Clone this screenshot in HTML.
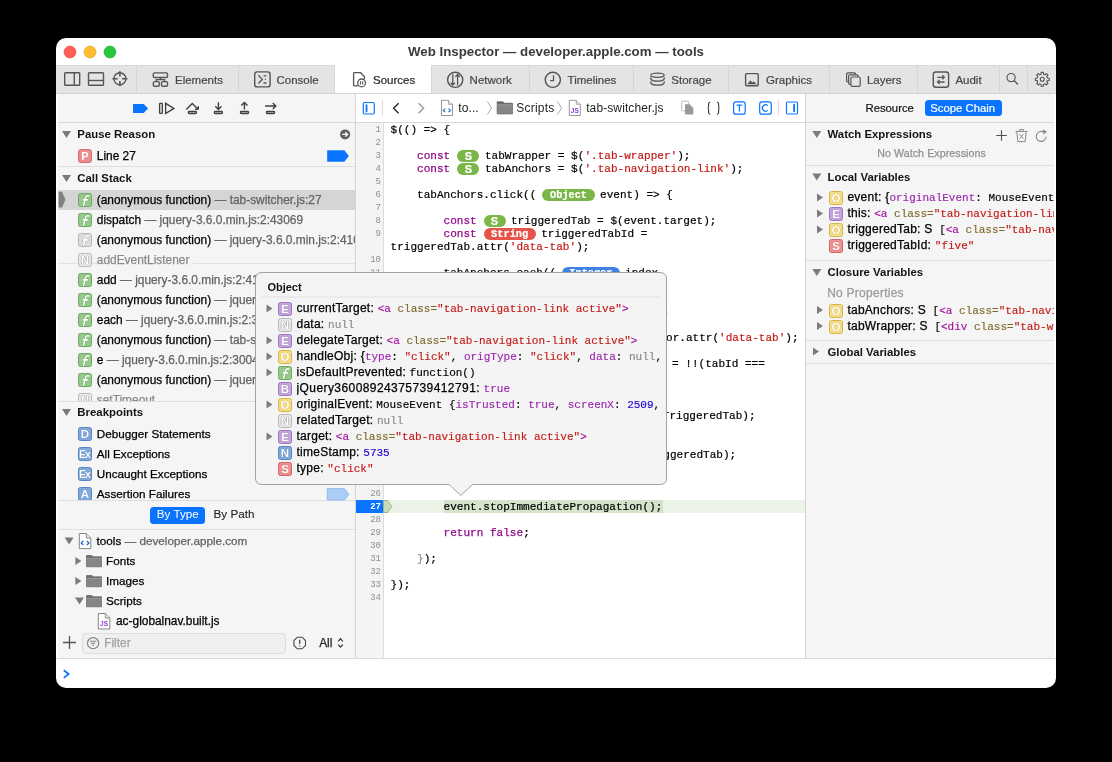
<!DOCTYPE html>
<html><head><meta charset="utf-8">
<style>
*{box-sizing:border-box;margin:0;padding:0}
html,body{width:1112px;height:762px;background:#000;overflow:hidden}
body{font-family:"Liberation Sans",sans-serif;font-size:11px;color:#222;position:relative}
#win{will-change:transform;position:absolute;left:0;top:0;width:1112px;height:762px;clip-path:inset(38px 56px 74px 56px round 10px);background:#fff}
.a{position:absolute;white-space:pre}
.bg{position:absolute}
.mono{font-family:"Liberation Mono",monospace}
svg.ov{position:absolute;left:0;top:0;width:1112px;height:762px}
.tab{font-size:11.5px;color:#474747;line-height:14px;-webkit-text-stroke:0.2px currentColor}
.hdr{font-weight:bold;font-size:11.4px;color:#141414;line-height:14px}
.row{font-size:11.9px;color:#000;line-height:14px;-webkit-text-stroke:0.25px currentColor}
.sub{color:#636363}
.code{font-family:"Liberation Mono",monospace;font-size:11.05px;line-height:13px;color:#000;-webkit-text-stroke:0.2px currentColor}
.ln{font-family:"Liberation Mono",monospace;font-size:9px;color:#888;line-height:13px;text-align:right;width:24.5px}
.kw{color:#900a8a;-webkit-text-stroke:0.25px currentColor}
.str{color:#c41a16}
.tag{color:#aa0d91}
.attr{color:#836c28}
.num{color:#1c00cf}
.nul{color:#808080}
.prop{color:#8a1ea0}
.ic{position:absolute;width:14px;height:14px;border-radius:2.5px;border:1px solid;color:#fff;font-weight:bold;font-size:11.5px;line-height:12.5px;text-align:center;font-family:"Liberation Sans",sans-serif}
.fn{--o:#4f8f43;background:#96c98a;border-color:#6dac60;font-style:italic;font-size:13px;line-height:13px;-webkit-text-stroke:0.5px #fff;text-shadow:0 0 1px #4f8f43}
.fng{--o:#8a8a8a;background:#dcdcdc;border-color:#b8b8b8;font-style:italic;font-size:13px;line-height:13px;-webkit-text-stroke:0.5px #fff;text-shadow:0 0 1px #8a8a8a}
.nat{background:#e9e9e9;border-color:#b9b9b9;color:#fff;text-shadow:0 0 1px #777,0 0 1px #777}
.blu{background:#82a8da;border-color:#5886c3;text-shadow:0 0 1px #3a6aa8}
.ex{font-size:10.5px;letter-spacing:-1px;text-indent:-1px}
.red{background:#ee8f8f;border-color:#d06767;text-shadow:0 0 1px #b04848}
.pur{background:#c3a4dc;border-color:#9d76bd;text-shadow:0 0 1px #7a4f9c}
.yel{background:#f5dd86;border-color:#d5b54c;text-shadow:0 0 1px #b0902a}
.pill{display:inline-block;height:12px;border-radius:6px;color:#fff;font-weight:bold;font-size:10.3px;line-height:13px;text-align:center;vertical-align:top;margin-top:0.5px;font-family:"Liberation Mono",monospace}
.pg{background:#7ab648}
.pr{background:#e5534b}
.pb{background:#3f82e0}
.r12{font-size:12px;letter-spacing:0.25px;line-height:14px;color:#000;-webkit-text-stroke:0.25px currentColor}
.r12 .mono{font-size:11px;letter-spacing:0;-webkit-text-stroke-width:0.15px}
.hdr2{font-size:11.3px;line-height:14px;color:#111;-webkit-text-stroke:0.2px currentColor}
.mono.prop{color:#9b27ae}
.mono.tag{color:#a30f9b}
.mono.attr{color:#7f6a2a}
.mono.str{color:#c41a16}
.mono.num{color:#1c00cf}
.mono.nul{color:#8a8a8a}
</style></head><body>
<div id="win">
  <!-- title bar -->
  <div class="a" style="left:0;top:38px;width:1112px;text-align:center;font-weight:bold;font-size:13.3px;color:#3b3b3b;line-height:16px;top:43.5px">Web Inspector — developer.apple.com — tools</div>

  <!-- tab bar -->
  <div class="bg" style="left:56px;top:65px;width:1000px;height:29px;background:#e4e4e4;border-top:1px solid #d9d9d9;border-bottom:1px solid #d3d3d3"></div>
  <div class="bg" style="left:335px;top:65px;width:96px;height:28px;background:#fff"></div>

  <!-- left sidebar -->
  <div class="bg" style="left:56px;top:94px;width:299px;height:564px;background:#f5f5f5"></div>
  <!-- editor -->
  <div class="bg" style="left:356px;top:94px;width:449px;height:564px;background:#fff"></div>
  <div class="bg" style="left:356px;top:123px;width:27px;height:535px;background:#f4f4f4"></div>
  <!-- right sidebar -->
  <div class="bg" style="left:806px;top:94px;width:250px;height:564px;background:#f5f5f5"></div>
  <!-- dividers -->
  <div class="bg" style="left:355px;top:94px;width:1px;height:564px;background:#d4d4d4"></div>
  <div class="bg" style="left:805px;top:94px;width:1px;height:564px;background:#d4d4d4"></div>
  <div class="bg" style="left:383px;top:123px;width:1px;height:535px;background:#dcdcdc"></div>
  <div class="bg" style="left:56px;top:122px;width:1000px;height:1px;background:#d8d8d8"></div>
  <div class="bg" style="left:56px;top:658px;width:1000px;height:1px;background:#dcdcdc"></div>
  <div class="bg" style="left:56px;top:659px;width:1000px;height:29px;background:#fff"></div>

  <div class="a tab" style="left:175px;top:73px">Elements</div>
  <div class="a tab" style="left:276.5px;top:73px">Console</div>
  <div class="a tab" style="left:373px;top:73px;color:#262626">Sources</div>
  <div class="a tab" style="left:469.6px;top:73px">Network</div>
  <div class="a tab" style="left:567.6px;top:73px">Timelines</div>
  <div class="a tab" style="left:671.3px;top:73px">Storage</div>
  <div class="a tab" style="left:766px;top:73px">Graphics</div>
  <div class="a tab" style="left:866.9px;top:73px">Layers</div>
  <div class="a tab" style="left:955.4px;top:73px">Audit</div>
  <svg class="ov" viewBox="0 0 1112 762">
    <g fill="#d6d6d6">
      <rect x="136" y="66" width="1" height="27"/>
      <rect x="238" y="66" width="1" height="27"/>
      <rect x="334" y="66" width="1" height="27"/>
      <rect x="431" y="66" width="1" height="27"/>
      <rect x="529" y="66" width="1" height="27"/>
      <rect x="633" y="66" width="1" height="27"/>
      <rect x="728" y="66" width="1" height="27"/>
      <rect x="829" y="66" width="1" height="27"/>
      <rect x="917" y="66" width="1" height="27"/>
      <rect x="999" y="66" width="1" height="27"/>
      <rect x="1027" y="66" width="1" height="27"/>
    </g>
    <!-- traffic lights -->
    <circle cx="70" cy="52" r="6" fill="#ff5f57" stroke="#e2463f" stroke-width="0.6"/>
    <circle cx="90" cy="52" r="6" fill="#febc2e" stroke="#e1a116" stroke-width="0.6"/>
    <circle cx="110" cy="52" r="6" fill="#28c840" stroke="#1aab29" stroke-width="0.6"/>
    <g fill="none" stroke="#555" stroke-width="1.4">
      <!-- split v -->
      <rect x="64.7" y="72.7" width="15" height="12.6" rx="0.8"/>
      <line x1="74.3" y1="72.7" x2="74.3" y2="85.3"/>
      <!-- split h -->
      <rect x="88.5" y="72.7" width="15" height="12.6" rx="0.8"/>
      <line x1="88.5" y1="80.5" x2="103.5" y2="80.5"/>
      <!-- crosshair -->
      <circle cx="119.9" cy="78.8" r="6"/>
      <path d="M119.9 71.3V76.6M119.9 81V86.3M112.4 78.8H117.7M122.1 78.8H127.4" stroke-width="1.6"/>
      <!-- elements -->
      <rect x="153.3" y="72.9" width="14.2" height="4.6" rx="1"/>
      <rect x="153.3" y="81.6" width="6" height="4.6" rx="1.3"/>
      <rect x="161.5" y="81.6" width="6" height="4.6" rx="1.3"/>
      <path d="M160.4 77.5V79.6M156.3 81.6V79.6H164.5V81.6"/>
      <!-- console -->
      <rect x="254.7" y="71.9" width="15.4" height="15" rx="2.5"/>
      <path d="M258.4 75.3L262.3 79.4L258.4 83.5" stroke-width="1.3"/>
      <path d="M263.5 75.9H266.4M264.9 79.4H265.9M263.5 83H266.4" stroke-width="1.3"/>
      <!-- sources -->
      <path d="M358 85.9H354.4Q353.6 85.9 353.6 85.1V73.5Q353.6 72.7 354.4 72.7H360.6L364.4 76.5V79.2" stroke-width="1.3"/>
      <circle cx="361.6" cy="82.9" r="3.9" stroke-width="1.3"/>
      <path d="M360.5 81.2V84.6M362.7 81.2V84.6" stroke-width="1.1"/>
      <!-- network -->
      <circle cx="455.2" cy="79.8" r="7.6"/>
      <path d="M452.8 74.2V85M450.6 82.8L452.8 85L455 82.8M457.6 85.4V74.6M455.4 76.8L457.6 74.6L459.8 76.8" stroke-width="1.3"/>
      <!-- timelines -->
      <circle cx="552.8" cy="79.8" r="7.6"/>
      <path d="M553.5 75.2V80.6H550.2" stroke-width="1.3"/>
      <!-- storage -->
      <ellipse cx="657.5" cy="75.2" rx="6.6" ry="2.1" stroke-width="1.3"/>
      <path d="M651 77.3C650.2 78.5 650.7 81.1 657.5 81.1C664.3 81.1 664.8 78.5 664 77.3M651 81.4C650.2 82.6 650.7 85.2 657.5 85.2C664.3 85.2 664.8 82.6 664 81.4" stroke-width="1.3"/>
      <!-- graphics -->
      <rect x="745.6" y="73.6" width="12.6" height="12.2" rx="1"/>
      <!-- layers -->
      <rect x="846.6" y="72.8" width="9" height="9" rx="1.3" stroke-width="1.2"/>
      <rect x="848.6" y="74.8" width="9.5" height="9.5" rx="1.3" fill="#e4e4e4" stroke-width="1.2"/>
      <rect x="850.9" y="77" width="9.3" height="9.3" rx="1.3" fill="#e4e4e4" stroke-width="1.2"/>
      <!-- audit -->
      <rect x="933.3" y="72" width="15.3" height="15.2" rx="2.5"/>
      <path d="M937.3 77.3H944.4M942.3 75.2L944.4 77.3L942.3 79.4M944.6 82H937.5M939.6 79.9L937.5 82L939.6 84.1" stroke-width="1.3"/>
      <!-- search -->
      <circle cx="1011.1" cy="77.6" r="4.1" stroke-width="1.15"/>
      <path d="M1014 80.5L1018 84.5" stroke-width="1.2"/>
    </g>
    <path d="M747.3 84.2L750.4 80.2L752.3 82.4L753.6 81.2L756.8 84.2Z" fill="#555"/>
    <!-- gear -->
    <path d="M1049.21 78.20L1049.21 80.40L1047.45 80.54L1046.82 82.07L1047.96 83.41L1046.41 84.96L1045.07 83.82L1043.54 84.45L1043.40 86.21L1041.20 86.21L1041.06 84.45L1039.53 83.82L1038.19 84.96L1036.64 83.41L1037.78 82.07L1037.15 80.54L1035.39 80.40L1035.39 78.20L1037.15 78.06L1037.78 76.53L1036.64 75.19L1038.19 73.64L1039.53 74.78L1041.06 74.15L1041.20 72.39L1043.40 72.39L1043.54 74.15L1045.07 74.78L1046.41 73.64L1047.96 75.19L1046.82 76.53L1047.45 78.06Z" fill="none" stroke="#555" stroke-width="1.1" stroke-linejoin="round"/>
    <circle cx="1042.3" cy="79.3" r="2" fill="none" stroke="#555" stroke-width="1.1"/>
  </svg>
<div class="a" style="left:0;top:0;width:1112px;height:762px;clip-path:inset(94px 757px 0 56px)">
<div class="bg" style="left:56px;top:166px;width:299px;height:1px;background:#dedede"></div>
<div class="bg" style="left:56px;top:190px;width:299px;height:20px;background:#d5d5d5"></div>
<div class="bg" style="left:56px;top:401px;width:299px;height:1px;background:#dedede"></div>
<div class="bg" style="left:56px;top:500px;width:299px;height:1px;background:#dedede"></div>
<div class="bg" style="left:56px;top:529px;width:299px;height:1px;background:#dedede"></div>
<div class="bg" style="left:56px;top:263px;width:299px;height:1px;background:#e2e2e2"></div>
<div class="a hdr" style="left:77.3px;top:127px;">Pause Reason</div>
<div class="a row" style="left:96.8px;top:149px;">Line 27</div>
<div class="a hdr" style="left:77.3px;top:171px;">Call Stack</div>
<div class="ic fn" style="left:78px;top:193px;"><svg style="position:absolute;left:-1px;top:-1px" width="14" height="14" viewBox="0 0 14 14"><path d="M10.9 3.1C9.6 2.5 8.1 2.7 7.6 4.5L5.5 12.2M5.3 6.9H9.6" fill="none" style="stroke:var(--o)" stroke-width="2.5" stroke-linecap="round" opacity="0.55"/><path d="M10.9 3.1C9.6 2.5 8.1 2.7 7.6 4.5L5.5 12.2M5.3 6.9H9.6" fill="none" stroke="#fff" stroke-width="1.6" stroke-linecap="round"/></svg></div>
<div class="a row" style="left:96.8px;top:193px;">(anonymous function)<span class="sub"> — tab-switcher.js:27</span></div>
<div class="ic fn" style="left:78px;top:213px;"><svg style="position:absolute;left:-1px;top:-1px" width="14" height="14" viewBox="0 0 14 14"><path d="M10.9 3.1C9.6 2.5 8.1 2.7 7.6 4.5L5.5 12.2M5.3 6.9H9.6" fill="none" style="stroke:var(--o)" stroke-width="2.5" stroke-linecap="round" opacity="0.55"/><path d="M10.9 3.1C9.6 2.5 8.1 2.7 7.6 4.5L5.5 12.2M5.3 6.9H9.6" fill="none" stroke="#fff" stroke-width="1.6" stroke-linecap="round"/></svg></div>
<div class="a row" style="left:96.8px;top:213px;">dispatch<span class="sub"> — jquery-3.6.0.min.js:2:43069</span></div>
<div class="ic fng" style="left:78px;top:233px;"><svg style="position:absolute;left:-1px;top:-1px" width="14" height="14" viewBox="0 0 14 14"><path d="M10.9 3.1C9.6 2.5 8.1 2.7 7.6 4.5L5.5 12.2M5.3 6.9H9.6" fill="none" style="stroke:var(--o)" stroke-width="2.5" stroke-linecap="round" opacity="0.55"/><path d="M10.9 3.1C9.6 2.5 8.1 2.7 7.6 4.5L5.5 12.2M5.3 6.9H9.6" fill="none" stroke="#fff" stroke-width="1.6" stroke-linecap="round"/></svg></div>
<div class="a row" style="left:96.8px;top:233px;">(anonymous function)<span class="sub"> — jquery-3.6.0.min.js:2:41048</span></div>
<div class="ic nat" style="left:78px;top:253px;">N</div>
<div class="a row" style="left:96.8px;top:253px;color:#8a8a8a;background:#f5f5f5;padding-right:4px">addEventListener</div>
<div class="ic fn" style="left:78px;top:273px;"><svg style="position:absolute;left:-1px;top:-1px" width="14" height="14" viewBox="0 0 14 14"><path d="M10.9 3.1C9.6 2.5 8.1 2.7 7.6 4.5L5.5 12.2M5.3 6.9H9.6" fill="none" style="stroke:var(--o)" stroke-width="2.5" stroke-linecap="round" opacity="0.55"/><path d="M10.9 3.1C9.6 2.5 8.1 2.7 7.6 4.5L5.5 12.2M5.3 6.9H9.6" fill="none" stroke="#fff" stroke-width="1.6" stroke-linecap="round"/></svg></div>
<div class="a row" style="left:96.8px;top:273px;">add<span class="sub"> — jquery-3.6.0.min.js:2:41430</span></div>
<div class="ic fn" style="left:78px;top:293px;"><svg style="position:absolute;left:-1px;top:-1px" width="14" height="14" viewBox="0 0 14 14"><path d="M10.9 3.1C9.6 2.5 8.1 2.7 7.6 4.5L5.5 12.2M5.3 6.9H9.6" fill="none" style="stroke:var(--o)" stroke-width="2.5" stroke-linecap="round" opacity="0.55"/><path d="M10.9 3.1C9.6 2.5 8.1 2.7 7.6 4.5L5.5 12.2M5.3 6.9H9.6" fill="none" stroke="#fff" stroke-width="1.6" stroke-linecap="round"/></svg></div>
<div class="a row" style="left:96.8px;top:293px;">(anonymous function)<span class="sub"> — jquery-3.6.0.min.js:2:40542</span></div>
<div class="ic fn" style="left:78px;top:313px;"><svg style="position:absolute;left:-1px;top:-1px" width="14" height="14" viewBox="0 0 14 14"><path d="M10.9 3.1C9.6 2.5 8.1 2.7 7.6 4.5L5.5 12.2M5.3 6.9H9.6" fill="none" style="stroke:var(--o)" stroke-width="2.5" stroke-linecap="round" opacity="0.55"/><path d="M10.9 3.1C9.6 2.5 8.1 2.7 7.6 4.5L5.5 12.2M5.3 6.9H9.6" fill="none" stroke="#fff" stroke-width="1.6" stroke-linecap="round"/></svg></div>
<div class="a row" style="left:96.8px;top:313px;">each<span class="sub"> — jquery-3.6.0.min.js:2:3004</span></div>
<div class="ic fn" style="left:78px;top:333px;"><svg style="position:absolute;left:-1px;top:-1px" width="14" height="14" viewBox="0 0 14 14"><path d="M10.9 3.1C9.6 2.5 8.1 2.7 7.6 4.5L5.5 12.2M5.3 6.9H9.6" fill="none" style="stroke:var(--o)" stroke-width="2.5" stroke-linecap="round" opacity="0.55"/><path d="M10.9 3.1C9.6 2.5 8.1 2.7 7.6 4.5L5.5 12.2M5.3 6.9H9.6" fill="none" stroke="#fff" stroke-width="1.6" stroke-linecap="round"/></svg></div>
<div class="a row" style="left:96.8px;top:333px;">(anonymous function)<span class="sub"> — tab-switcher.js:12</span></div>
<div class="ic fn" style="left:78px;top:353px;"><svg style="position:absolute;left:-1px;top:-1px" width="14" height="14" viewBox="0 0 14 14"><path d="M10.9 3.1C9.6 2.5 8.1 2.7 7.6 4.5L5.5 12.2M5.3 6.9H9.6" fill="none" style="stroke:var(--o)" stroke-width="2.5" stroke-linecap="round" opacity="0.55"/><path d="M10.9 3.1C9.6 2.5 8.1 2.7 7.6 4.5L5.5 12.2M5.3 6.9H9.6" fill="none" stroke="#fff" stroke-width="1.6" stroke-linecap="round"/></svg></div>
<div class="a row" style="left:96.8px;top:353px;">e<span class="sub"> — jquery-3.6.0.min.js:2:30046</span></div>
<div class="ic fn" style="left:78px;top:373px;"><svg style="position:absolute;left:-1px;top:-1px" width="14" height="14" viewBox="0 0 14 14"><path d="M10.9 3.1C9.6 2.5 8.1 2.7 7.6 4.5L5.5 12.2M5.3 6.9H9.6" fill="none" style="stroke:var(--o)" stroke-width="2.5" stroke-linecap="round" opacity="0.55"/><path d="M10.9 3.1C9.6 2.5 8.1 2.7 7.6 4.5L5.5 12.2M5.3 6.9H9.6" fill="none" stroke="#fff" stroke-width="1.6" stroke-linecap="round"/></svg></div>
<div class="a row" style="left:96.8px;top:373px;">(anonymous function)<span class="sub"> — jquery-3.6.0.min.js:2:30350</span></div>
<div class="ic nat" style="left:78px;top:393px;">N</div>
<div class="a row" style="left:96.8px;top:393px;color:#8a8a8a;background:#f5f5f5;padding-right:4px">setTimeout</div>
<div class="bg" style="left:56px;top:401px;width:299px;height:23px;background:#f5f5f5;border-top:1px solid #dedede"></div>
<div class="a hdr" style="left:77.3px;top:405px;">Breakpoints</div>
<div class="ic blu" style="left:78px;top:427px;">D</div>
<div class="a row" style="left:96.8px;top:427px;font-size:11.7px">Debugger Statements</div>
<div class="ic blu ex" style="left:78px;top:447px;">Ex</div>
<div class="a row" style="left:96.8px;top:447px;font-size:11.7px">All Exceptions</div>
<div class="ic blu ex" style="left:78px;top:467px;">Ex</div>
<div class="a row" style="left:96.8px;top:467px;font-size:11.7px">Uncaught Exceptions</div>
<div class="ic blu" style="left:78px;top:487px;">A</div>
<div class="a row" style="left:96.8px;top:487px;font-size:11.7px">Assertion Failures</div>
<div class="bg" style="left:56px;top:501px;width:299px;height:28px;background:#f5f5f5"></div>
<div class="bg" style="left:56px;top:500px;width:299px;height:1px;background:#dedede"></div>
<div class="a" style="left:150px;top:507px;width:54.5px;height:16.5px;background:#0a74fe;border-radius:3.5px"></div>
<div class="a row" style="left:156.8px;top:507px;color:#fff;-webkit-text-stroke:0;font-size:11.7px">By Type</div>
<div class="a row" style="left:213.5px;top:507px;color:#222;-webkit-text-stroke:0.1px currentColor;font-size:11.7px">By Path</div>
<div class="a row" style="left:96.6px;top:534px;font-size:11.7px">tools<span class="sub"> — developer.apple.com</span></div>
<div class="a row" style="left:106px;top:554px;font-size:11.7px">Fonts</div>
<div class="a row" style="left:106px;top:574px;font-size:11.7px">Images</div>
<div class="a row" style="left:106px;top:594px;font-size:11.7px">Scripts</div>
<div class="a row" style="left:116px;top:614px;">ac-globalnav.built.js</div>
<div class="bg" style="left:56px;top:629px;width:299px;height:29px;background:#f5f5f5"></div>
<div class="a" style="left:82.2px;top:632.8px;width:204px;height:21px;background:#f0f0f0;border:1px solid #dddddd;border-radius:4px"></div>
<div class="a row" style="left:104.2px;top:636px;color:#a0a0a0">Filter</div>
<div class="a row" style="left:319.2px;top:636px;color:#222">All</div>
<svg class="ov" viewBox="0 0 1112 762">
  <!-- debugger toolbar -->
  <path d="M133 104H143.7L148.1 108.5L143.7 112.9H133Z" fill="#0a74ff"/>
  <g fill="none" stroke="#404040" stroke-width="1.35">
    <rect x="159.6" y="103.4" width="2.7" height="10" rx="0.6"/>
    <path d="M165.6 103.3V113.5L173.9 108.4Z" stroke-linejoin="miter"/>
    <path d="M186.2 109.5L192.3 103.4L198.3 109.4M198.3 109.4V106.2M198.3 109.4H195.1" stroke-width="1.4"/>
    <rect x="188.4" y="111.5" width="8" height="2" rx="0.8"/>
    <path d="M218.4 102.2V109.3M215.3 106.3L218.4 109.4L221.5 106.3" stroke-width="1.4"/>
    <rect x="214.4" y="111.5" width="8" height="2" rx="0.8"/>
    <path d="M244.4 102.6V109.6M241.3 105.5L244.4 102.4L247.5 105.5" stroke-width="1.4"/>
    <rect x="240.5" y="111.5" width="8" height="2" rx="0.8"/>
    <path d="M265.1 106H275.8M272.8 103L275.8 106L272.8 109" stroke-width="1.4"/>
    <rect x="266.5" y="111.5" width="8" height="2" rx="0.8"/>
  </g>
  <!-- disclosure triangles -->
  <g fill="#7b7b7b">
    <path d="M62 131H71L66.5 138Z"/>
    <path d="M62 175H71L66.5 182Z"/>
    <path d="M62 409H71L66.5 416Z"/>
    <path d="M64.6 537.5H73.6L69.1 544.5Z"/>
    <path d="M75.4 557V565L81.4 561Z"/>
    <path d="M75.4 577V585L81.4 581Z"/>
    <path d="M75 597.5H84L79.5 604.5Z"/>
  </g>
  <!-- pause reason goto -->
  <circle cx="345.1" cy="134.4" r="5" fill="#5f5f5f"/>
  <path d="M342.2 134.4H347.4M345.3 132.2L347.6 134.4L345.3 136.6" fill="none" stroke="#fff" stroke-width="1.3"/>
  <!-- P icon -->
  <rect x="78.5" y="149.5" width="13" height="13" rx="2.3" fill="#ea8d8d" stroke="#d57070"/>
  <text x="85" y="160.3" text-anchor="middle" font-family="Liberation Sans" font-weight="bold" font-size="11" fill="#fff">P</text>
  <path d="M327.2 150.2H344.3L348.9 156L344.3 161.8H327.2Z" fill="#0a74ff"/>
  <!-- selected arrow -->
  <path d="M58.6 191.7H62L65.5 199.5L62 207.4H58.6Z" fill="#828282"/>
  <!-- assertion failures marker (light blue) -->
  <path d="M327.2 488.5H344.3L348.9 494.3L344.3 500.1H327.2Z" fill="#a9cdf5" stroke="#8ab6ea" stroke-width="0.8"/>
  <!-- tree icons -->
  <g>
    <path d="M79.3 533.5H86.3L90.8 538V548.6H79.3Z" fill="#fff" stroke="#7a7a7a" stroke-width="0.9"/>
    <path d="M86.3 533.5V538H90.8" fill="#e6e6e6" stroke="#7a7a7a" stroke-width="0.8"/>
    <path d="M83.4 540.8L81.2 543L83.4 545.2M86.8 540.8L89 543L86.8 545.2" fill="none" stroke="#1f5fd6" stroke-width="1.2"/>
  </g>
  <g id="fold">
    <path d="M86.5 555.5H92L93.2 556.8H101.5V566.8H86.5Z" fill="#6f6f6f" stroke="#555" stroke-width="0.6"/>
    <rect x="86.5" y="558" width="15" height="8.8" fill="#858585"/>
    <rect x="86.5" y="558" width="15" height="1" fill="#9a9a9a"/>
  </g>
  <use href="#fold" y="20"/>
  <use href="#fold" y="40"/>
  <g>
    <path d="M98.3 613.5H105.3L109.8 618V629H98.3Z" fill="#fff" stroke="#7a7a7a" stroke-width="0.9"/>
    <path d="M105.3 613.5V618H109.8" fill="#e6e6e6" stroke="#7a7a7a" stroke-width="0.8"/>
    <text x="104" y="626" text-anchor="middle" font-family="Liberation Sans" font-weight="bold" font-size="6.5" fill="#8a3ee0">JS</text>
  </g>
  <!-- filter bar -->
  <path d="M69.5 636V649M63 642.5H76" stroke="#555" stroke-width="1.3"/>
  <circle cx="93.1" cy="643.2" r="5.6" fill="none" stroke="#808080" stroke-width="1.1"/>
  <path d="M90 641.2H96.2M91 643.2H95.2M92.2 645.2H94" stroke="#808080" stroke-width="1.1"/>
  <path d="M297.3 637.2H302.1L305.5 640.6V645.4L302.1 648.8H297.3L293.9 645.4V640.6Z" fill="none" stroke="#4a4a4a" stroke-width="1.1"/>
  <path d="M299.7 639.8V644M299.7 645.4V646.5" stroke="#4a4a4a" stroke-width="1.3"/>
  <path d="M338.2 641.3L340.5 638.7L342.8 641.3M338.2 644.6L340.5 647.2L342.8 644.6" fill="none" stroke="#333" stroke-width="1.2"/>
  <!-- console prompt -->
  <path d="M63.8 670.3L68.6 674.1L63.8 677.9" fill="none" stroke="#0a74ff" stroke-width="1.8"/>
</svg>
</div>
<div class="bg" style="left:384px;top:500px;width:421px;height:13px;background:#eaf3e5"></div>
<div class="bg" style="left:444px;top:500px;width:219px;height:13px;background:#d4e3ca"></div>
<div class="bg" style="left:356px;top:500px;width:27px;height:13px;background:#0a74fe"></div>
<div class="a ln" style="left:356.5px;top:124px;color:#8f8f8f;font-weight:normal">1</div>
<div class="a ln" style="left:356.5px;top:137px;color:#8f8f8f;font-weight:normal">2</div>
<div class="a ln" style="left:356.5px;top:150px;color:#8f8f8f;font-weight:normal">3</div>
<div class="a ln" style="left:356.5px;top:163px;color:#8f8f8f;font-weight:normal">4</div>
<div class="a ln" style="left:356.5px;top:176px;color:#8f8f8f;font-weight:normal">5</div>
<div class="a ln" style="left:356.5px;top:189px;color:#8f8f8f;font-weight:normal">6</div>
<div class="a ln" style="left:356.5px;top:202px;color:#8f8f8f;font-weight:normal">7</div>
<div class="a ln" style="left:356.5px;top:215px;color:#8f8f8f;font-weight:normal">8</div>
<div class="a ln" style="left:356.5px;top:228px;color:#8f8f8f;font-weight:normal">9</div>
<div class="a ln" style="left:356.5px;top:254px;color:#8f8f8f;font-weight:normal">10</div>
<div class="a ln" style="left:356.5px;top:267px;color:#8f8f8f;font-weight:normal">11</div>
<div class="a ln" style="left:356.5px;top:488px;color:#8f8f8f;font-weight:normal">26</div>
<div class="a ln" style="left:356.5px;top:501px;color:#fff;font-weight:bold">27</div>
<div class="a ln" style="left:356.5px;top:514px;color:#8f8f8f;font-weight:normal">28</div>
<div class="a ln" style="left:356.5px;top:527px;color:#8f8f8f;font-weight:normal">29</div>
<div class="a ln" style="left:356.5px;top:540px;color:#8f8f8f;font-weight:normal">30</div>
<div class="a ln" style="left:356.5px;top:553px;color:#8f8f8f;font-weight:normal">31</div>
<div class="a ln" style="left:356.5px;top:566px;color:#8f8f8f;font-weight:normal">32</div>
<div class="a ln" style="left:356.5px;top:579px;color:#8f8f8f;font-weight:normal">33</div>
<div class="a ln" style="left:356.5px;top:592px;color:#8f8f8f;font-weight:normal">34</div>
<div class="a code" style="left:390.5px;top:123.5px">$(() =&gt; {</div>
<div class="a code" style="left:390.5px;top:149.5px">    <span class="kw">const</span><span class="pill pg" style="margin-left:7px;margin-right:-1.2px;width:22.3px;font-family:Liberation Sans;font-size:11px">S</span> tabWrapper = $(<span class="str">'.tab-wrapper'</span>);</div>
<div class="a code" style="left:390.5px;top:162.5px">    <span class="kw">const</span><span class="pill pg" style="margin-left:7px;margin-right:-1.2px;width:22.3px;font-family:Liberation Sans;font-size:11px">S</span> tabAnchors = $(<span class="str">'.tab-navigation-link'</span>);</div>
<div class="a code" style="left:390.5px;top:188.5px">    tabAnchors.click((<span class="pill pg" style="margin-left:6px;margin-right:-1.2px;width:52.3px;">Object</span> event) =&gt; {</div>
<div class="a code" style="left:390.5px;top:214.5px">        <span class="kw">const</span><span class="pill pg" style="margin-left:6.8px;margin-right:-1.2px;width:22px;font-family:Liberation Sans;font-size:11px">S</span> triggeredTab = $(event.target);</div>
<div class="a code" style="left:390.5px;top:227.5px">        <span class="kw">const</span><span class="pill pr" style="margin-left:6.8px;margin-right:-1.2px;width:52.3px;">String</span> triggeredTabId =</div>
<div class="a code" style="left:390.5px;top:240.5px">triggeredTab.attr(<span class="str">'data-tab'</span>);</div>
<div class="a code" style="left:390.5px;top:266.5px">        tabAnchors.each((<span class="pill pb" style="margin-left:6px;margin-right:-1.2px;width:57.4px;">Integer</span> index</div>
<div class="a code" style="left:390.5px;top:500.5px">        event.stopImmediatePropagation();</div>
<div class="a code" style="left:390.5px;top:526.5px">        <span class="kw">return</span> <span class="kw">false</span>;</div>
<div class="a code" style="left:390.5px;top:552.5px">    <span style="color:#8c8c8c">}</span>);</div>
<div class="a code" style="left:390.5px;top:578.5px">});</div>
<div class="a code" style="left:663px;top:305.5px">;</div>
<div class="a code" style="left:666px;top:331.5px">or.attr(<span class="str">'data-tab'</span>);</div>
<div class="a code" style="left:672px;top:357.5px">= !!(tabId ===</div>
<div class="a code" style="left:662.8px;top:409.5px">TriggeredTab);</div>
<div class="a code" style="left:643.4px;top:448.5px">triggeredTab);</div>
<div class="a" style="left:458.3px;top:101px;font-size:12px;line-height:14px;color:#1e1e1e;letter-spacing:0.1px">to...</div>
<div class="a" style="left:516.3px;top:101px;font-size:12px;line-height:14px;color:#1e1e1e;letter-spacing:0.2px">Scripts</div>
<div class="a" style="left:586.2px;top:101px;font-size:12px;line-height:14px;color:#1e1e1e;letter-spacing:0.1px">tab-switcher.js</div>
<svg class="ov" viewBox="0 0 1112 762">
  <rect x="363.3" y="102.5" width="11" height="11.5" rx="1.2" fill="none" stroke="#0a74ff" stroke-width="1.2"/>
  <rect x="365.6" y="104.3" width="1.8" height="8" rx="0.9" fill="#0a74ff"/>
  <rect x="382" y="100" width="1" height="15.5" fill="#dcdcdc"/>
  <path d="M398.6 103.2L393.6 108.2L398.6 113.2" fill="none" stroke="#2a2a2a" stroke-width="1.4"/>
  <path d="M418.6 103.2L423.6 108.2L418.6 113.2" fill="none" stroke="#9a9a9a" stroke-width="1.4"/>
  <path d="M441.5 100.3H448.5L452.5 104.3V115.5H441.5Z" fill="#fff" stroke="#8a8a8a" stroke-width="0.9"/>
  <path d="M448.5 100.3V104.3H452.5" fill="#e8e8e8" stroke="#8a8a8a" stroke-width="0.7"/>
  <path d="M445.2 108.6L443.4 110.4L445.2 112.2M448.6 108.6L450.4 110.4L448.6 112.2" fill="none" stroke="#1f5fd6" stroke-width="1.1"/>
  <path d="M487.3 101.5L491.6 108L487.3 114.5" fill="none" stroke="#9d9d9d" stroke-width="0.9"/>
  <path d="M497.2 101.8H502.8L504.2 103.2H512.4V113.9H497.2Z" fill="#6e6e6e" stroke="#4f4f4f" stroke-width="0.7"/>
  <rect x="497.3" y="104.5" width="15" height="9.3" fill="#858585"/>
  <rect x="497.3" y="104.5" width="15" height="1" fill="#a0a0a0"/>
  <path d="M557.3 101.5L561.6 108L557.3 114.5" fill="none" stroke="#9d9d9d" stroke-width="0.9"/>
  <path d="M569.3 100.3H576.3L580.3 104.3V115.5H569.3Z" fill="#fff" stroke="#8a8a8a" stroke-width="0.9"/>
  <path d="M576.3 100.3V104.3H580.3" fill="#e8e8e8" stroke="#8a8a8a" stroke-width="0.7"/>
  <text x="574.8" y="113.3" text-anchor="middle" font-family="Liberation Sans" font-weight="bold" font-size="6.5" fill="#8a3ee0">JS</text>
  <rect x="681.6" y="101.2" width="7.2" height="9.6" rx="1" fill="#fff" stroke="#b5b5b5" stroke-width="0.9"/>
  <path d="M685 104.3H689.6L693.3 108V114.4H685Z" fill="#9a9a9a"/>
  <path d="M710.2 102.2Q708.6 102.2 708.6 103.8V107Q708.6 108.2 707.6 108.2Q708.6 108.2 708.6 109.4V112.6Q708.6 114.2 710.2 114.2M717 102.2Q718.6 102.2 718.6 103.8V107Q718.6 108.2 719.6 108.2Q718.6 108.2 718.6 109.4V112.6Q718.6 114.2 717 114.2" fill="none" stroke="#333" stroke-width="1.1"/>
  <rect x="733.6" y="101.8" width="11.6" height="12.4" rx="2.3" fill="none" stroke="#0a74ff" stroke-width="1.2"/>
  <path d="M736.6 105.2H742.2M739.4 105.2V111.4" stroke="#0a74ff" stroke-width="1.2"/>
  <rect x="759.7" y="101.8" width="11.6" height="12.4" rx="2.3" fill="none" stroke="#0a74ff" stroke-width="1.2"/>
  <path d="M767.8 105.6A3.2 3.2 0 1 0 767.8 110.4" fill="none" stroke="#0a74ff" stroke-width="1.2"/>
  <rect x="778" y="100" width="1" height="15.5" fill="#dcdcdc"/>
  <rect x="786.5" y="102" width="11" height="12" rx="1.2" fill="none" stroke="#0a74ff" stroke-width="1.2"/>
  <rect x="793.2" y="103.8" width="1.8" height="8.4" rx="0.9" fill="#0a74ff"/>
</svg>
<svg class="ov" viewBox="0 0 1112 762">
  <path d="M383.5 500.5H387.5L391.8 506.5L387.5 512.5H383.5Z" fill="#c9ddb9" stroke="#8fb07a" stroke-width="0.9"/>
</svg>
<div class="a" style="left:0;top:0;width:1112px;height:762px;clip-path:inset(94px 56px 0 806px)">
<div class="a hdr2" style="left:865.5px;top:101px;">Resource</div>
<div class="a" style="left:924.5px;top:99.6px;width:77.5px;height:16.7px;background:#0a74fe;border-radius:3.5px"></div>
<div class="a hdr2" style="left:930.3px;top:101px;color:#fff">Scope Chain</div>
<div class="bg" style="left:806px;top:165px;width:250px;height:1px;background:#dedede"></div>
<div class="bg" style="left:806px;top:260px;width:250px;height:1px;background:#dedede"></div>
<div class="bg" style="left:806px;top:340px;width:250px;height:1px;background:#dedede"></div>
<div class="bg" style="left:806px;top:363px;width:250px;height:1px;background:#dedede"></div>
<div class="a hdr" style="left:827.5px;top:127px;">Watch Expressions</div>
<div class="a r12" style="left:877.2px;top:145.5px;font-size:10.6px;letter-spacing:0.1px;color:#8f8f8f">No Watch Expressions</div>
<div class="a hdr" style="left:827.5px;top:169.5px;">Local Variables</div>
<div class="ic yel" style="left:829px;top:191.0px">O</div>
<div class="a r12" style="left:847.4px;top:190.3px;">event: {<span class="mono prop">originalEvent</span><span class="mono ">: MouseEvent, </span>...</div>
<div class="ic pur" style="left:829px;top:207.0px">E</div>
<div class="a r12" style="left:847.4px;top:206.3px;">this: <span class="mono tag">&lt;a</span><span class="mono "> </span><span class="mono attr">class</span><span class="mono attr">=</span><span class="mono str">"tab-navigation-link active"</span></div>
<div class="ic yel" style="left:829px;top:223.0px">O</div>
<div class="a r12" style="left:847.4px;top:222.3px;">triggeredTab: S<span class="mono "> [</span><span class="mono tag">&lt;a</span><span class="mono "> </span><span class="mono attr">class</span><span class="mono attr">=</span><span class="mono str">"tab-navigation-link"</span></div>
<div class="ic red" style="left:829px;top:239.0px">S</div>
<div class="a r12" style="left:847.4px;top:238.3px;">triggeredTabId: <span class="mono str">"five"</span></div>
<div class="a hdr" style="left:827.5px;top:265px;">Closure Variables</div>
<div class="a r12" style="left:827.2px;top:285.7px;color:#9a9a9a">No Properties</div>
<div class="ic yel" style="left:829px;top:303.5px">O</div>
<div class="a r12" style="left:847.4px;top:302.8px;">tabAnchors: S<span class="mono "> [</span><span class="mono tag">&lt;a</span><span class="mono "> </span><span class="mono attr">class</span><span class="mono attr">=</span><span class="mono str">"tab-navigation-link"</span></div>
<div class="ic yel" style="left:829px;top:319.5px">O</div>
<div class="a r12" style="left:847.4px;top:318.8px;">tabWrapper: S<span class="mono "> [</span><span class="mono tag">&lt;div</span><span class="mono "> </span><span class="mono attr">class</span><span class="mono attr">=</span><span class="mono str">"tab-wrapper"</span></div>
<div class="a hdr" style="left:827.5px;top:344.5px;">Global Variables</div>
<svg class="ov" viewBox="0 0 1112 762">
  <g fill="#7b7b7b">
    <path d="M812.3 131H821.3L816.8 138Z"/>
    <path d="M812.3 173.5H821.3L816.8 180.5Z"/>
    <path d="M812.3 269H821.3L816.8 276Z"/>
    <path d="M813 347.5V355.5L819 351.5Z"/>
    <path d="M817 193.5V201.5L823 197.5Z"/>
    <path d="M817 209.5V217.5L823 213.5Z"/>
    <path d="M817 225.5V233.5L823 229.5Z"/>
    <path d="M817 306V314L823 310Z"/>
    <path d="M817 322V330L823 326Z"/>
  </g>
  <path d="M1001.5 130.2V140.8M996.2 135.5H1006.8" stroke="#505050" stroke-width="1.1"/>
  <g fill="none" stroke="#8a8a8a" stroke-width="1">
    <path d="M1015.5 131.4H1027.5M1019.6 131.4V129.6H1023.4V131.4M1016.8 131.4L1017.8 141.6H1025.2L1026.2 131.4M1019.6 134.2L1023.4 138.6M1023.4 134.2L1019.6 138.6"/>
    <path d="M1044.5 132.6A5 5 0 1 0 1046.2 136.8" stroke-width="1.1"/>
  </g>
  <path d="M1042.8 129.3L1047 131.7L1043.6 134.6Z" fill="#8a8a8a"/>
</svg>
</div>
  <!--ICONS-->
<svg class="ov" viewBox="0 0 1112 762"><path d="M262.0 272.5H660.0Q666.5 272.5 666.5 279.0V478.0Q666.5 484.5 660.0 484.5H472.6L460.8 495.5L449 484.5H262.0Q255.5 484.5 255.5 478.0V279.0Q255.5 272.5 262.0 272.5Z" fill="#f4f4f4" stroke="#a2a2a2" stroke-width="1"/><rect x="261" y="296.5" width="400" height="1" fill="#dfdfdf"/></svg>
<div class="a hdr" style="left:267.4px;top:279.5px;font-size:11px;color:#111">Object</div>
<div class="ic pur" style="left:278px;top:302.0px">E</div>
<div class="a r12" style="left:296.5px;top:300.9px;width:365px;overflow:hidden">currentTarget: <span class="mono tag">&lt;a</span><span class="mono "> </span><span class="mono attr">class</span><span class="mono attr">=</span><span class="mono str">"tab-navigation-link active"</span><span class="mono tag">&gt;</span></div>
<div class="ic nat" style="left:278px;top:318.0px">N</div>
<div class="a r12" style="left:296.5px;top:316.9px;width:365px;overflow:hidden">data: <span class="mono nul">null</span></div>
<div class="ic pur" style="left:278px;top:334.0px">E</div>
<div class="a r12" style="left:296.5px;top:332.9px;width:365px;overflow:hidden">delegateTarget: <span class="mono tag">&lt;a</span><span class="mono "> </span><span class="mono attr">class</span><span class="mono attr">=</span><span class="mono str">"tab-navigation-link active"</span><span class="mono tag">&gt;</span></div>
<div class="ic yel" style="left:278px;top:350.0px">O</div>
<div class="a r12" style="left:296.5px;top:348.9px;width:365px;overflow:hidden">handleObj: {<span class="mono prop">type</span><span class="mono ">: </span><span class="mono str">"click"</span><span class="mono ">, </span><span class="mono prop">origType</span><span class="mono ">: </span><span class="mono str">"click"</span><span class="mono ">, </span><span class="mono prop">data</span><span class="mono ">: </span><span class="mono nul">null</span><span class="mono ">,</span></div>
<div class="ic fn" style="left:278px;top:366.0px"><svg style="position:absolute;left:-1px;top:-1px" width="14" height="14" viewBox="0 0 14 14"><path d="M10.9 3.1C9.6 2.5 8.1 2.7 7.6 4.5L5.5 12.2M5.3 6.9H9.6" fill="none" style="stroke:var(--o)" stroke-width="2.5" stroke-linecap="round" opacity="0.55"/><path d="M10.9 3.1C9.6 2.5 8.1 2.7 7.6 4.5L5.5 12.2M5.3 6.9H9.6" fill="none" stroke="#fff" stroke-width="1.6" stroke-linecap="round"/></svg></div>
<div class="a r12" style="left:296.5px;top:364.9px;width:365px;overflow:hidden">isDefaultPrevented: <span class="mono ">function()</span></div>
<div class="ic pur" style="left:278px;top:382.0px">B</div>
<div class="a r12" style="left:296.5px;top:380.9px;width:365px;overflow:hidden"><span style="letter-spacing:0.42px">jQuery36008924375739412791:</span> <span class="mono prop">true</span></div>
<div class="ic yel" style="left:278px;top:398.0px">O</div>
<div class="a r12" style="left:296.5px;top:396.9px;width:365px;overflow:hidden">originalEvent: <span class="mono ">MouseEvent</span><span class="mono "> {</span><span class="mono prop">isTrusted</span><span class="mono ">: </span><span class="mono prop">true</span><span class="mono ">, </span><span class="mono prop">screenX</span><span class="mono ">: </span><span class="mono num">2509</span><span class="mono ">,</span></div>
<div class="ic nat" style="left:278px;top:414.0px">N</div>
<div class="a r12" style="left:296.5px;top:412.9px;width:365px;overflow:hidden">relatedTarget: <span class="mono nul">null</span></div>
<div class="ic pur" style="left:278px;top:430.0px">E</div>
<div class="a r12" style="left:296.5px;top:428.9px;width:365px;overflow:hidden">target: <span class="mono tag">&lt;a</span><span class="mono "> </span><span class="mono attr">class</span><span class="mono attr">=</span><span class="mono str">"tab-navigation-link active"</span><span class="mono tag">&gt;</span></div>
<div class="ic blu" style="left:278px;top:446.0px">N</div>
<div class="a r12" style="left:296.5px;top:444.9px;width:365px;overflow:hidden">timeStamp: <span class="mono num">5735</span></div>
<div class="ic red" style="left:278px;top:462.0px">S</div>
<div class="a r12" style="left:296.5px;top:460.9px;width:365px;overflow:hidden">type: <span class="mono str">"click"</span></div>
<svg class="ov" viewBox="0 0 1112 762"><g fill="#7b7b7b"><path d="M266.5 304.5V312.5L272.5 308.5Z"/><path d="M266.5 336.5V344.5L272.5 340.5Z"/><path d="M266.5 352.5V360.5L272.5 356.5Z"/><path d="M266.5 368.5V376.5L272.5 372.5Z"/><path d="M266.5 400.5V408.5L272.5 404.5Z"/><path d="M266.5 432.5V440.5L272.5 436.5Z"/></g></svg>
  <div class="bg" style="left:56px;top:94px;width:2px;height:564px;background:#fff"></div>
  <div class="bg" style="left:1054px;top:94px;width:2px;height:564px;background:#fff"></div>
</div>
</body></html>
